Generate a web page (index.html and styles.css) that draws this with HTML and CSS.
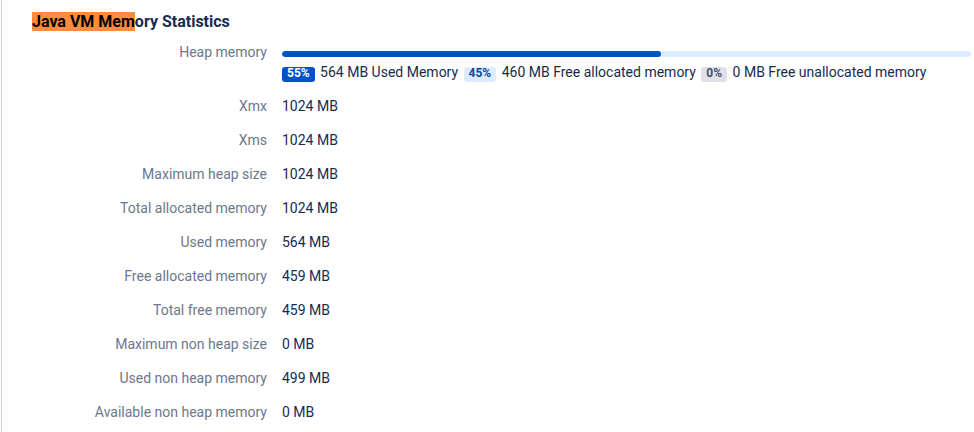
FILE: index.html
```html
<!DOCTYPE html>
<html lang="en">
<head>
<meta charset="utf-8">
<title>Java VM Memory Statistics</title>
<link rel="stylesheet" href="styles.css">
</head>
<body>
<div class="page">
  <h2 class="title"><mark class="hl">Java VM Mem</mark>ory Statistics</h2>
  <dl class="stats">
    <dt class="label">Heap memory</dt>
    <dd class="value">
      <div class="bar"><div class="bar-fill" style="width:55%"></div></div>
      <div class="legend"><span class="badge badge-used">55%</span> 564 MB Used Memory <span class="badge badge-free">45%</span> 460 MB Free allocated memory <span class="badge badge-unalloc">0%</span> 0 MB Free unallocated memory</div>
    </dd>
    <dt class="label">Xmx</dt><dd class="value">1024 MB</dd>
    <dt class="label">Xms</dt><dd class="value">1024 MB</dd>
    <dt class="label">Maximum heap size</dt><dd class="value">1024 MB</dd>
    <dt class="label">Total allocated memory</dt><dd class="value">1024 MB</dd>
    <dt class="label">Used memory</dt><dd class="value">564 MB</dd>
    <dt class="label">Free allocated memory</dt><dd class="value">459 MB</dd>
    <dt class="label">Total free memory</dt><dd class="value">459 MB</dd>
    <dt class="label">Maximum non heap size</dt><dd class="value">0 MB</dd>
    <dt class="label">Used non heap memory</dt><dd class="value">499 MB</dd>
    <dt class="label">Available non heap memory</dt><dd class="value">0 MB</dd>
  </dl>
</div>
</body>
</html>
```
FILE: styles.css
```css
html, body {
  margin: 0;
  padding: 0;
  background: #ffffff;
}
body {
  font-family: Roboto, "Liberation Sans", sans-serif;
  font-size: 14px;
  line-height: 20px;
  color: #172b4d;
}
.page {
  margin-left: 1px;
  border-left: 1px solid #d0d0d0;
  min-height: 100vh;
  box-sizing: border-box;
  padding: 12px 3px 0 30px;
}
.title {
  margin: 0;
  font-size: 16px;
  line-height: 20px;
  font-weight: 700;
  color: #172b4d;
}
.hl {
  background: #fd8b40;
  color: #000000;
}
.stats {
  margin: 10px 0 0;
  display: grid;
  grid-template-columns: 235px 1fr;
  column-gap: 15px;
  row-gap: 14px;
}
.label {
  margin: 0;
  text-align: right;
  color: #6b778c;
  white-space: nowrap;
}
.value {
  margin: 0;
  color: #172b4d;
  white-space: nowrap;
}
.bar {
  height: 6px;
  margin: 9px 0 5px;
  border-radius: 3px;
  background: #deebff;
  overflow: hidden;
}
.bar-fill {
  height: 100%;
  background: #0052cc;
  border-radius: 3px;
}
.badge {
  display: inline-block;
  font-size: 12px;
  font-weight: 700;
  line-height: 13px;
  padding: 0 5px 2px;
  border-radius: 3px;
  margin: 0 2px;
}
.badge-used {
  background: #0052cc;
  color: #ffffff;
  margin-left: 0;
}
.badge-free {
  background: #deebff;
  color: #0747a6;
}
.badge-unalloc {
  background: #dfe1e6;
  color: #42526e;
}
```
